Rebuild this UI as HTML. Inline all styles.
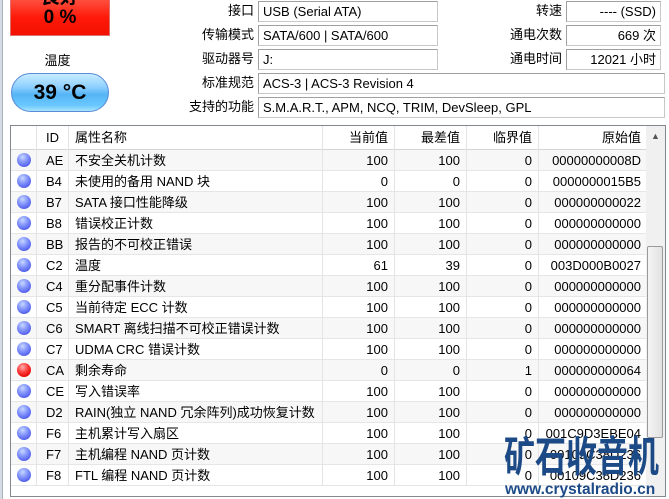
<!DOCTYPE html>
<html><head><meta charset="utf-8"><style>
*{margin:0;padding:0;box-sizing:border-box}
body{width:669px;height:499px;overflow:hidden;background:#fff;font-family:"Liberation Sans","Noto Sans CJK SC",sans-serif;font-size:13px;color:#000;position:relative}
.abs{position:absolute}
.lbl{position:absolute;text-align:right;white-space:nowrap;line-height:20px}
.box{position:absolute;border:1px solid #c8c8c8;border-left-color:#a0a0a0;border-top-color:#a0a0a0;height:21px;line-height:19px;padding:0 4px;white-space:nowrap;background:#fff}
.dot{position:absolute;left:17px;width:14px;height:14px;border-radius:50%;background:radial-gradient(circle at 40% 30%,#c8d8ff 0,#8a9cff 35%,#5a68f0 70%,#3c46c8 100%)}
.dot.r{background:radial-gradient(circle at 40% 30%,#ffb0b0 0,#ff4040 40%,#e00000 80%,#b00000 100%)}
.row{position:absolute;left:11px;width:635px;height:21px;line-height:21px;border-bottom:1px solid #e6e6e6}
.row div{position:absolute;top:0;white-space:nowrap}
.vl{position:absolute;top:126px;width:1px;height:360px;background:#e4e4e4}
</style></head><body>
<div class="abs" style="left:0;top:0;width:3px;height:499px;background:#d6dbe4;border-right:1px solid #a9b0bb"></div>
<div class="abs" style="left:10px;top:-10px;width:100px;height:46px;background:linear-gradient(#ff6a5a,#ff1a0a 60%,#f21000);border:1px solid #e07070;overflow:hidden">
<div class="abs" style="left:0;top:-9px;width:98px;text-align:center;font-weight:bold;font-size:19px">良好</div>
<div class="abs" style="left:0;top:16px;width:98px;text-align:center;font-weight:bold;font-size:19px">0 %</div>
</div>
<div class="abs" style="left:10px;top:50px;width:95px;text-align:center;font-size:13px">温度</div>
<div class="abs" style="left:11px;top:73px;width:98px;height:39px;border-radius:20px;background:linear-gradient(#c8ecff 0,#8fd0ff 35%,#55b5f5 55%,#6ac8ff 85%,#a8e4ff 100%);border:1px solid #5a8ad8;text-align:center;line-height:37px;font-weight:bold;font-size:21px">39 °C</div>

<div class="lbl" style="left:150px;width:104px;top:1px">接口</div>
<div class="lbl" style="left:150px;width:104px;top:25px">传输模式</div>
<div class="lbl" style="left:150px;width:104px;top:49px">驱动器号</div>
<div class="lbl" style="left:150px;width:104px;top:73px">标准规范</div>
<div class="lbl" style="left:150px;width:104px;top:97px">支持的功能</div>
<div class="box" style="left:258px;top:1px;width:180px">USB (Serial ATA)</div>
<div class="box" style="left:258px;top:25px;width:180px">SATA/600 | SATA/600</div>
<div class="box" style="left:258px;top:49px;width:180px">J:</div>
<div class="box" style="left:258px;top:73px;width:407px">ACS-3 | ACS-3 Revision 4</div>
<div class="box" style="left:258px;top:97px;width:407px">S.M.A.R.T., APM, NCQ, TRIM, DevSleep, GPL</div>
<div class="lbl" style="left:470px;width:92px;top:1px">转速</div>
<div class="lbl" style="left:470px;width:92px;top:25px">通电次数</div>
<div class="lbl" style="left:470px;width:92px;top:49px">通电时间</div>
<div class="box" style="left:566px;top:1px;width:95px;text-align:right">---- (SSD)</div>
<div class="box" style="left:566px;top:25px;width:95px;text-align:right">669 次</div>
<div class="box" style="left:566px;top:49px;width:95px;text-align:right">12021 小时</div>

<div class="abs" style="left:10px;top:125px;width:656px;height:372px;border:1px solid #828790"></div>
<div class="abs" style="left:11px;top:126px;width:635px;height:24px;background:#fff;border-bottom:1px solid #d5d5d5;line-height:23px">
<div class="abs" style="left:35px">ID</div>
<div class="abs" style="left:64px">属性名称</div>
<div class="abs" style="left:311px;width:66px;text-align:right">当前值</div>
<div class="abs" style="left:383px;width:66px;text-align:right">最差值</div>
<div class="abs" style="left:455px;width:66px;text-align:right">临界值</div>
<div class="abs" style="left:527px;width:103px;text-align:right">原始值</div>
</div>
<div id="rows"></div>
<div class="vl" style="left:36px"></div>
<div class="vl" style="left:68px"></div>
<div class="vl" style="left:322px"></div>
<div class="vl" style="left:394px"></div>
<div class="vl" style="left:466px"></div>
<div class="vl" style="left:538px"></div>
<div class="abs" style="left:646px;top:126px;width:19px;height:370px;background:#f0f0f0"></div>
<div class="abs" style="left:651px;top:131px;font-size:9px;color:#555">▲</div>
<div class="abs" style="left:647px;top:246px;width:16px;height:192px;border:1px solid #9a9a9a;border-radius:2px;background:linear-gradient(90deg,#f4f4f4,#e2e2e2)"></div>
<div class="abs" style="left:504px;top:432px;font-size:31px;font-weight:bold;color:#1c4a86;line-height:44px;white-space:nowrap;transform:scaleY(1.35);transform-origin:0 50%;font-family:'Noto Sans CJK SC',sans-serif">矿石收音机</div>
<div class="abs" style="left:505px;top:480px;font-size:15.5px;font-weight:bold;color:#1c4a86;line-height:19px;white-space:nowrap">www.crystalradio.cn</div>
<script>
var d=[["AE","不安全关机计数","100","100","0","00000000008D"],["B4","未使用的备用 NAND 块","0","0","0","0000000015B5"],["B7","SATA 接口性能降级","100","100","0","000000000022"],["B8","错误校正计数","100","100","0","000000000000"],["BB","报告的不可校正错误","100","100","0","000000000000"],["C2","温度","61","39","0","003D000B0027"],["C4","重分配事件计数","100","100","0","000000000000"],["C5","当前待定 ECC 计数","100","100","0","000000000000"],["C6","SMART 离线扫描不可校正错误计数","100","100","0","000000000000"],["C7","UDMA CRC 错误计数","100","100","0","000000000000"],["CA","剩余寿命","0","0","1","000000000064"],["CE","写入错误率","100","100","0","000000000000"],["D2","RAIN(独立 NAND 冗余阵列)成功恢复计数","100","100","0","000000000000"],["F6","主机累计写入扇区","100","100","0","001C9D3EBE04"],["F7","主机编程 NAND 页计数","100","100","0","00109C38D236"],["F8","FTL 编程 NAND 页计数","100","100","0","00109C38D236"]];
var h="";d.forEach(function(r,i){var t=150+i*21;
h+='<div class="row" style="top:'+t+'px;background:'+(i%2==0?'#f7f7f7':'#fff')+'"><div style="left:35px">'+r[0]+'</div><div style="left:64px">'+r[1]+'</div><div style="left:311px;width:66px;text-align:right">'+r[2]+'</div><div style="left:383px;width:66px;text-align:right">'+r[3]+'</div><div style="left:455px;width:66px;text-align:right">'+r[4]+'</div><div style="left:527px;width:103px;text-align:right">'+r[5]+'</div></div><div class="dot'+(r[0]=="CA"?" r":"")+'" style="top:'+(t+3)+'px"></div>';});
document.getElementById("rows").innerHTML=h;
</script>
</body></html>
